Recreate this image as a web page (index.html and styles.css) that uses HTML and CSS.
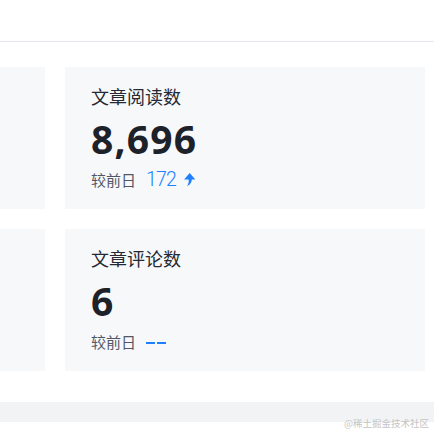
FILE: index.html
```html
<!DOCTYPE html>
<html lang="zh-CN">
<head>
<meta charset="utf-8">
<link rel="stylesheet" href="styles.css">
</head>
<body>
<div class="page">
  <header class="topbar"></header>
  <main class="grid">
    <div class="card card-partial"></div>
    <div class="card">
      <div class="title">文章阅读数</div>
      <div class="value">8,696</div>
      <div class="compare">
        <span class="label">较前日</span>
        <span class="delta">172</span>
        <svg class="arrow" width="13" height="13" viewBox="0 0 12 13"><path d="M6.2 0 L11.8 6.4 L8.3 6.4 C8.2 9.3 6.9 11.6 3.4 13 C5.1 10.8 5.5 8.6 5.1 6.4 L0.6 6.4 Z" fill="#1e80ff"/></svg>
      </div>
    </div>
    <div class="card card-partial"></div>
    <div class="card">
      <div class="title">文章评论数</div>
      <div class="value">6</div>
      <div class="compare">
        <span class="label">较前日</span>
        <span class="dashes"><i></i><i></i></span>
      </div>
    </div>
  </main>
  <div class="band"></div>
  <div class="watermark">@稀土掘金技术社区</div>
</div>
</body>
</html>
```
FILE: styles.css
```css
html, body {
  margin: 0;
  padding: 0;
  background: #ffffff;
}
.page {
  position: relative;
  width: 434px;
  height: 434px;
  overflow: hidden;
  font-family: "Open Sans", "Noto Sans CJK SC", sans-serif;
}
.topbar {
  height: 41px;
  border-bottom: 1px solid #e4e6eb;
}
.grid {
  display: grid;
  grid-template-columns: 45px 360px;
  grid-auto-rows: 142px;
  column-gap: 20px;
  row-gap: 20px;
  margin-top: 25px;
}
.card {
  background: #f7f8fa;
  padding: 16px 26px 0;
  box-sizing: border-box;
}
.card-partial {
  padding: 0;
}
.title {
  font-family: "Noto Sans CJK SC", sans-serif;
  font-size: 18px;
  line-height: 26px;
  color: #252933;
}
.value {
  font-family: "Open Sans", sans-serif;
  font-weight: 700;
  font-size: 39px;
  line-height: 48px;
  letter-spacing: 1.2px;
  color: #1d2129;
  margin-top: 6px;
}
.compare {
  display: flex;
  align-items: center;
  height: 24px;
  margin-top: 4px;
}
.label {
  font-family: "Noto Sans CJK SC", sans-serif;
  font-size: 15px;
  color: #515767;
  margin-right: 10px;
}
.delta {
  font-family: Roboto, sans-serif;
  font-weight: 300;
  font-size: 19.5px;
  letter-spacing: -0.8px;
  color: #1e80ff;
  margin-right: 7px;
}
.arrow {
  display: block;
}
.dashes {
  display: flex;
  gap: 2px;
  margin-left: 0;
  margin-top: 3px;
}
.dashes i {
  display: block;
  width: 9px;
  height: 2px;
  background: #1e80ff;
}
.band {
  height: 20px;
  margin-top: 31px;
  background: #f2f3f5;
}
.watermark {
  position: absolute;
  right: 5px;
  bottom: 5px;
  font-family: "Noto Sans CJK SC", sans-serif;
  font-size: 9.5px;
  line-height: 12px;
  color: #c4c4c4;
}
```
